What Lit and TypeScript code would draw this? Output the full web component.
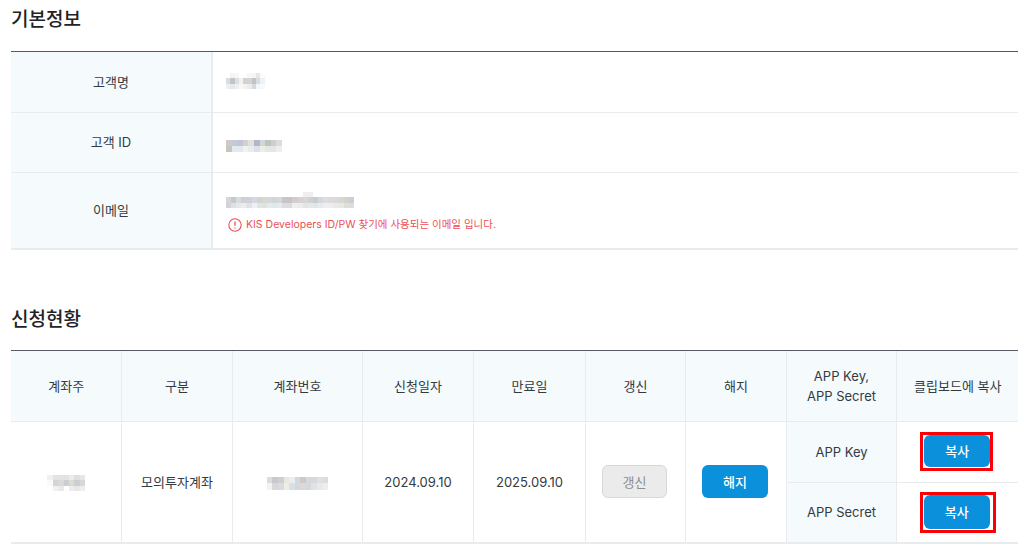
import { LitElement, html, css } from "lit";
import { customElement, property } from "lit/decorators.js";

@customElement("blur-patch")
class BlurPatch extends LitElement {
  @property({ type: Array }) rows: string[][] = [];
  @property({ type: Number }) cw = 5.5;
  @property({ type: Number }) ch = 5.5;
  static styles = css`
    :host { display: inline-block; vertical-align: middle; line-height: 0; }
    .row { display: flex; }
    .px { flex: none; }
  `;
  render() {
    return html`${this.rows.map(
      (r) => html`<div class="row">${r.map(
        (c) => html`<span class="px" style="width:${this.cw}px;height:${this.ch}px;background:${c}"></span>`
      )}</div>`
    )}`;
  }
}

const W = "#ffffff";
const NAME = [
  [W, "#f4f4f4", "#f7f7f7", W, W, "#f6f6f6", "#f4f5f5", "#e6e6e8", "#fcfcfc"],
  ["#dcdcdc", "#bcc7cb", "#dbdfdf", "#f2f2f2", "#d9d2cc", "#cbd6dd", "#c4c3c4", "#d8dde2", "#eef2f6"],
  ["#f0eff0", "#e6e7e8", "#efefef", "#fbf8f2", "#f4f3ef", "#e6eef2", "#dad9d9", "#f2f6f8", "#f6fafc"],
];
const ID = [
  ["#cfcbc4", "#c4cadb", "#c3c5d2", "#d0d0d6", "#dfe2d9", "#b3b6c8", "#d3d5d7", "#b9c5c0", "#cdd0d0", "#dcdcdf"],
  ["#c8c5bd", "#e2ebef", "#e4e9ee", "#f1f3f2", "#e8ebf0", "#dfe0ea", "#eceee8", "#e4e7e4", "#e4e6e4", "#eeeeee"],
];
const EMAIL = [
  [W, W, W, W, W, W, W, W, W, W, W, W, W, W, W, "#eeeeee", "#eeeeee", W, W, W, W, W, W, W, W],
  ["#d5d5d8", "#c8c8cc", "#d6dddd", "#cdd0d2", "#d0d0dc", "#d5d8e0", "#d2d3d0", "#d7d8d2", "#d2d8dc", "#cfd5d8", "#d8d8da", "#c8c4cc", "#cac2c8", "#d3cccc", "#d8d0d2", "#d6d8d6", "#d0d2d2", "#c5ccd4", "#d3d8dc", "#dcdde0", "#dcdadc", "#d8dbd8", "#d7d7d3", "#d6d4c8", "#c8cfd8"],
  ["#d2d3d6", "#e0e0e4", "#e3e8e8", "#efeaec", "#e0e2ea", "#eef0f4", "#e2e4de", "#dfe2e0", "#e2eaec", "#e0e8ec", "#e8e8ea", "#dcdce0", "#dadce2", "#eeeeee", "#ececec", "#e4e4e4", "#e6e8e6", "#e0e6ea", "#e6eaec", "#eeeeee", "#eeeef0", "#e8eae6", "#e8e8e4", "#dedfda", "#d8dde2"],
];
const OWNER = [
  ["#f3efec", "#dfe3e6", "#e2e4e4", "#dee3e6", "#ecebe6", "#dedfe3", "#e4e6e8"],
  ["#fafafa", "#d2d5d8", "#dddad6", "#c9ced2", "#dcdad4", "#ccced2", "#d4d8da"],
  [W, "#f1f2ee", "#e8e9e8", W, "#ecedec", "#e8e8e8", "#eeeeee"],
];
const ACCT = [
  ["#dddbe0", "#c9c8ca", "#cfcfcf", "#e8e8dc", "#e8eef2", "#d3d8dc", "#cfc8cc", "#d6d8de", "#d5d8dc", "#e0e0e0", "#dcdcdc"],
  ["#f1f2f2", "#d8d8da", "#dcd8e4", "#eeeee2", "#d8e0e2", "#d2d8dc", "#dcd8d8", "#d6d8de", "#dfe2e6", "#e8e8e8", "#eeeeee"],
];

@customElement("app-root")
class AppRoot extends LitElement {
  static styles = css`
    :host {
      display: block;
      width: 1024px;
      height: 551px;
      overflow: hidden;
      box-sizing: border-box;
      padding: 0 6px 0 11px;
      background: #fff;
      color: #333a42;
      font-family: Inter, "Noto Sans CJK KR", "Liberation Sans", sans-serif;
      font-size: 13px;
      line-height: 20px;
    }
    h2 {
      margin: 0;
      height: 51px;
      padding-top: 7px;
      box-sizing: border-box;
      font-size: 19px;
      line-height: 26px;
      font-weight: 500;
      color: #1f2226;
    }
    h2.second { margin-top: 53px; height: 47px; padding-top: 4px; }
    .rule { border-top: 1px solid #555a63; }
    table {
      width: 100%;
      table-layout: fixed;
      border-collapse: collapse;
    }
    th, td {
      padding: 0;
      text-align: center;
      font-weight: 400;
      border-bottom: 1px solid #e8ecef;
      vertical-align: middle;
    }
    th { background: #f5fafd; }
    .info th { border-right: 2px solid #e8ecef; }
    .info td { text-align: left; padding-left: 13px; }
    .info .r1 { height: 60px; }
    .info .r3 { height: 77px; }
    .info tr:last-child > * { border-bottom-width: 2px; }
    .up { position: relative; top: -2px; }
    .down { position: relative; top: 3px; }
    .note {
      display: flex;
      align-items: center;
      gap: 4px;
      margin: 9px 0 0 2px;
      font-size: 10.5px;
      line-height: 14px;
      color: #eb4f57;
    }
    .note svg { flex: none; }
    .apply th, .apply td { border-right: 1px solid #e8ecef; padding-left: 1px; }
    .apply th:last-child, .apply td:last-child { border-right: 0; }
    .apply .head { height: 70px; }
    .apply .sub { height: 61px; }
    .apply td.keyname { background: #f5fafd; }
    .apply tr.sub:last-child > *, .apply td[rowspan] { border-bottom-width: 2px; }
    .apply td.act { padding: 0 1px 0 0; }
    button {
      font: inherit;
      font-weight: 500;
      border: 0;
      border-radius: 6px;
      background: #0b90dc;
      color: #fff;
      padding: 0;
      width: 66px;
      height: 33px;
      display: block;
      margin: 0 auto;
    }
    button.off {
      width: 65px;
      background: #ebebec;
      color: #8b8e93;
      border: 1px solid #d6d8da;
      font-weight: 400;
    }
    .mark {
      display: inline-block;
      border: 3px solid #fb0007;
      padding: 0 0 1px;
    }
    .mark.b { padding: 0 3px 1px 0; margin-left: 2px; }
    .mark button { height: 32px; margin: 0 0 0 1px; }
    .mark.b button { height: 34px; }
  `;

  render() {
    return html`
      <h2>기본정보</h2>
      <div class="rule">
        <table class="info">
          <colgroup><col style="width:201px" /><col /></colgroup>
          <tr class="r1">
            <th>고객명</th>
            <td><blur-patch .rows=${NAME} .cw=${4.3} class="up"></blur-patch></td>
          </tr>
          <tr class="r1">
            <th>고객 ID</th>
            <td><blur-patch .rows=${ID} .cw=${5.6} .ch=${6} class="down"></blur-patch></td>
          </tr>
          <tr class="r3">
            <th>이메일</th>
            <td>
              <blur-patch .rows=${EMAIL} .cw=${5.12}></blur-patch>
              <div class="note">
                <svg width="14" height="14" viewBox="0 0 14 14" fill="none" stroke="#eb4f57" stroke-width="1.1" aria-hidden="true">
                  <circle cx="7" cy="7" r="6.2"></circle>
                  <path d="M7 3.6v4.2M7 9.4v1.1" stroke-width="1.3"></path>
                </svg>
                <span>KIS Developers ID/PW 찾기에 사용되는 이메일 입니다.</span>
              </div>
            </td>
          </tr>
        </table>
      </div>

      <h2 class="second">신청현황</h2>
      <div class="rule">
        <table class="apply">
          <colgroup>
            <col style="width:110px" /><col style="width:111px" /><col style="width:130px" />
            <col style="width:111px" /><col style="width:112px" /><col style="width:100px" />
            <col style="width:101px" /><col style="width:110px" /><col />
          </colgroup>
          <tr class="head">
            <th>계좌주</th>
            <th>구분</th>
            <th>계좌번호</th>
            <th>신청일자</th>
            <th>만료일</th>
            <th>갱신</th>
            <th>해지</th>
            <th>APP Key,<br />APP Secret</th>
            <th>클립보드에 복사</th>
          </tr>
          <tr class="sub">
            <td rowspan="2"><blur-patch .rows=${OWNER} .cw=${5.4}></blur-patch></td>
            <td rowspan="2">모의투자계좌</td>
            <td rowspan="2"><blur-patch .rows=${ACCT} .cw=${5.6} .ch=${6.5}></blur-patch></td>
            <td rowspan="2">2024.09.10</td>
            <td rowspan="2">2025.09.10</td>
            <td rowspan="2" class="act"><button class="off">갱신</button></td>
            <td rowspan="2" class="act"><button>해지</button></td>
            <td class="keyname">APP Key</td>
            <td class="act"><span class="mark"><button>복사</button></span></td>
          </tr>
          <tr class="sub">
            <td class="keyname">APP Secret</td>
            <td class="act"><span class="mark b"><button>복사</button></span></td>
          </tr>
        </table>
      </div>
    `;
  }
}
